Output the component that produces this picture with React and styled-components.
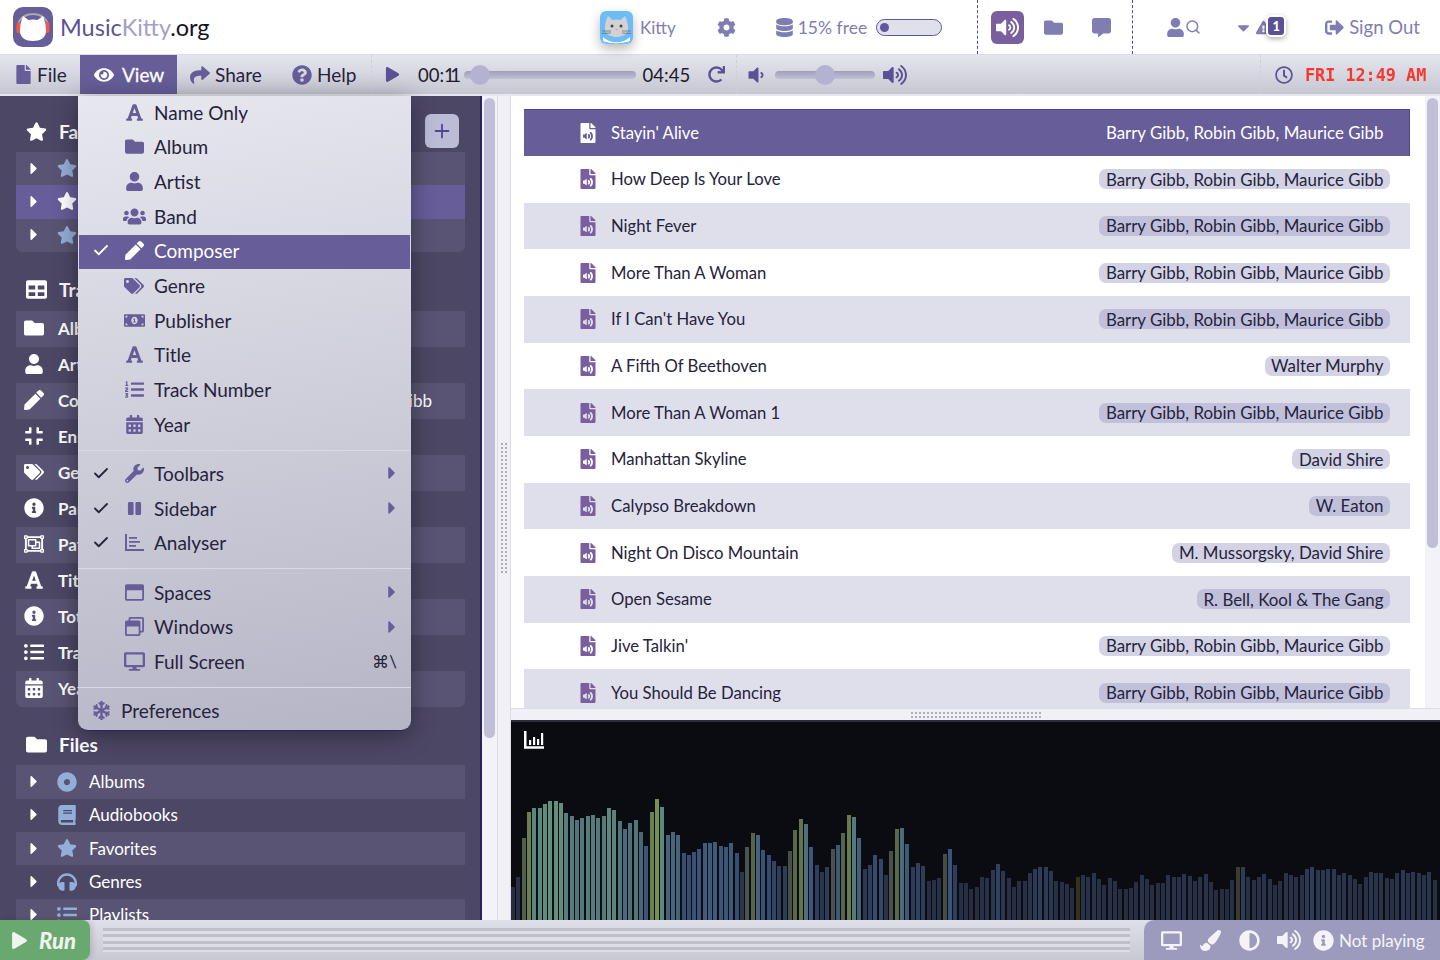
import styled, { createGlobalStyle } from 'styled-components';
import { Check, Plus, Search } from 'lucide-react';
import {
  FaAdjust, FaBook, FaCalendarAlt, FaCaretDown, FaCaretRight, FaCog,
  FaCommentAlt, FaCompress, FaDatabase, FaDesktop, FaDotCircle, FaExclamationTriangle,
  FaEye, FaFile, FaFileAudio, FaFolder, FaFont, FaHeadphones, FaInfoCircle, FaListOl, FaListUl,
  FaMoneyBillAlt, FaPaintBrush, FaPause, FaPen, FaPlay, FaQuestionCircle,
  FaRedo, FaRegClock, FaRegObjectGroup, FaRegWindowMaximize, FaRegWindowRestore, FaShare,
  FaSignOutAlt, FaSnowflake, FaStar, FaTable, FaTags, FaUser, FaUsers, FaVolumeDown, FaVolumeUp,
  FaWrench,
} from 'react-icons/fa';

const GlobalStyle = createGlobalStyle`
  html, body { margin: 0; height: 100%; overflow: hidden; }
  body { font-family: "Lato", "Liberation Sans", sans-serif; color: #26233c; }
  * { box-sizing: border-box; }
`;

const ACCENT = '#675d99';
const HEADER_ICON = '#7f7db2';

const Page = styled.div`
  width: 1440px;
  height: 960px;
  display: flex;
  flex-direction: column;
  position: relative;
  overflow: hidden;
`;

/* top bar */
const Header = styled.header`
  height: 54px;
  flex: none;
  display: flex;
  align-items: center;
  background: #fff;
`;

const Brand = styled.div`
  display: flex;
  align-items: center;
  gap: 7px;
  padding-left: 13px;
  width: 600px;
  font-size: 23.5px;
  color: #15131f;
  span:nth-child(1) { color: #5b5296; }
  span:nth-child(2) { color: #a3a0c4; }
`;

const BrandName = styled.div``;

const HeaderItem = styled.div`
  display: flex;
  align-items: center;
  gap: ${(p) => p.$gap ?? 5}px;
  margin-left: ${(p) => p.$ml ?? 0}px;
  font-size: ${(p) => p.$size ?? 19}px;
  color: ${HEADER_ICON};
  position: relative;
  flex: none;
  svg { font-size: 19px; flex: none; }
`;

const Avatar = styled.div`
  width: 33px;
  height: 33px;
  border-radius: 6px;
  overflow: hidden;
  box-shadow: 0 5px 12px rgba(0, 0, 0, 0.28);
  svg { display: block; font-size: inherit; }
`;

const Meter = styled.div`
  width: 66px;
  height: 17px;
  border: 1.5px solid #5f56a0;
  border-radius: 9px;
  background: #e0e0ea;
  padding: 3px 3px;
  margin-left: 5px;
  &::before {
    content: '';
    display: block;
    width: 9px;
    height: 9px;
    border-radius: 50%;
    background: #5f56a0;
  }
`;

const DashedGroup = styled.div`
  height: 54px;
  width: 156px;
  margin-left: 35px;
  flex: none;
  display: flex;
  align-items: center;
  padding-left: 13px;
  border-left: 1.5px dashed #4e469a;
  border-right: 1.5px dashed #4e469a;
`;

const TabButton = styled.div`
  width: 33px;
  height: 33px;
  border-radius: 6px;
  background: #7a5f9e;
  color: #fff;
  font-size: 23px;
  display: flex;
  align-items: center;
  justify-content: center;
`;

const CountBadge = styled.div`
  position: absolute;
  left: 32px;
  top: -3px;
  width: 20px;
  height: 22px;
  border-radius: 5px;
  background: #fff;
  padding: 2px;
  box-shadow: 0 2px 5px rgba(0, 0, 0, 0.3);
  &::before {
    content: '1';
    display: flex;
    align-items: center;
    justify-content: center;
    height: 100%;
    border-radius: 3px;
    background: #5b5296;
    color: #fff;
    font-size: 13px;
    font-weight: 900;
  }
`;

/* toolbar */
const Toolbar = styled.div`
  height: 42px;
  flex: none;
  display: flex;
  align-items: stretch;
  background: linear-gradient(#e5e5ee, #c7c7d3);
  border-top: 1px solid #dbdbe8;
  border-bottom: 2px solid #e6e6ee;
  font-size: 19px;
`;

const MenuButton = styled.div`
  display: flex;
  align-items: center;
  gap: ${(p) => p.$gap ?? 5}px;
  width: ${(p) => p.$w}px;
  padding-left: ${(p) => p.$pl}px;
  flex: none;
  background: ${(p) => (p.$active ? ACCENT : 'transparent')};
  color: ${(p) => (p.$active ? '#fff' : '#26233c')};
  ${(p) => p.$active && '-webkit-text-stroke: 0.3px #fff;'}
  svg { color: ${(p) => (p.$active ? '#fff' : ACCENT)}; font-size: 20px; flex: none; }
`;

const Section = styled.div`
  display: flex;
  align-items: center;
  flex: none;
  width: ${(p) => p.$w}px;
  padding-left: ${(p) => p.$pl}px;
  border-left: 1px dashed #cfcfdc;
  color: #5b5296;
`;

const Time = styled.span`
  color: #1d1b2c;
  margin-left: ${(p) => p.$ml}px;
  font-size: 18.5px;
`;

const TightDigits = styled.span`
  letter-spacing: -4.5px;
`;

const Slider = styled.div`
  width: ${(p) => p.$w}px;
  margin-left: ${(p) => p.$ml}px;
  height: 8px;
  flex: none;
  border-radius: 4px;
  background: linear-gradient(#9f9fb8, #c0c0d8);
  position: relative;
  &::after {
    content: '';
    position: absolute;
    left: ${(p) => p.$pos}px;
    top: -6px;
    width: 20px;
    height: 20px;
    border-radius: 50%;
    background: #b3b2d0;
  }
`;

const Led = styled.span`
  display: inline-block;
  font-family: "DejaVu Sans Mono", "Liberation Mono", monospace;
  font-size: 16.8px;
  font-weight: 700;
  color: #f4352b;
  margin-left: 12px;
  -webkit-mask-image: radial-gradient(circle at center, #000 0.7px, transparent 1px);
  -webkit-mask-size: 2px 2px;
  mask-image: radial-gradient(circle at center, #000 0.7px, transparent 1px);
  mask-size: 2px 2px;
`;

/* main */
const Main = styled.div`
  flex: 1;
  min-height: 0;
  display: flex;
`;

const Sidebar = styled.aside`
  width: 482px;
  flex: none;
  background: #4d4766;
  border-right: 2px solid #2a2360;
  padding: 18px 15px 0 16px;
  overflow: hidden;
  color: #fff;
`;

const Heading = styled.div`
  height: 34px;
  display: flex;
  align-items: center;
  gap: 12px;
  padding-left: 10px;
  margin-bottom: 4px;
  font-size: 19px;
  font-weight: 700;
  svg { font-size: 21px; flex: none; }
`;

const Group = styled.div`
  margin-bottom: 20.7px;
  border-radius: 0 0 6px 6px;
  overflow: hidden;
`;

const TreeRow = styled.div`
  height: 33.33px;
  display: flex;
  align-items: center;
  padding: 0 0 1px 12px;
  font-size: 17px;
  background: ${(p) => (p.$selected ? ACCENT : p.$shaded ? '#595473' : 'transparent')};
`;

const Caret = styled(FaCaretRight)`
  font-size: 19px;
  width: 12px;
  flex: none;
`;

const TreeIcon = styled.span`
  width: 20px;
  margin-left: 17px;
  margin-right: 12px;
  flex: none;
  display: flex;
  justify-content: center;
  font-size: 20px;
  color: ${(p) => (p.$selected ? '#fff' : '#93aed8')};
`;

const InfoRow = styled.div`
  height: 36px;
  display: flex;
  align-items: center;
  justify-content: space-between;
  padding: 0 33px 1px 8px;
  font-size: 17px;
  font-weight: 700;
  background: ${(p) => (p.$shaded ? '#595473' : 'transparent')};
`;

const InfoLabel = styled.span`
  display: flex;
  align-items: center;
  gap: 14px;
  svg { font-size: 20px; width: 20px; flex: none; }
`;

const InfoValue = styled.span`
  font-weight: 400;
`;

const AddButton = styled.div`
  position: absolute;
  left: 425px;
  top: 114px;
  width: 34px;
  height: 34px;
  border-radius: 6px;
  background: #bdbcd6;
  color: #4e469a;
  display: flex;
  align-items: center;
  justify-content: center;
`;

const Track = styled.div`
  width: 15px;
  flex: none;
  padding: 2px 2px;
  background: #f2f2f8;
`;

const Thumb = styled.div`
  height: ${(p) => p.$h}px;
  width: 11px;
  border-radius: 6px;
  background: #bfc0d8;
`;

const Splitter = styled.div`
  width: 14px;
  flex: none;
  display: flex;
  align-items: center;
  justify-content: center;
  background: #f0f0f6;
  border-left: 1px solid #dcdce8;
  border-right: 1px solid #dcdce8;
`;

const Grip = styled.div`
  width: ${(p) => p.$w}px;
  height: ${(p) => p.$h}px;
  background-image: radial-gradient(#adadb8 1.2px, transparent 1.5px);
  background-size: 4px 4px;
`;

const Content = styled.div`
  flex: 1;
  min-width: 0;
  display: flex;
  flex-direction: column;
`;

const ListArea = styled.div`
  height: 612px;
  flex: none;
  display: flex;
  background: #fff;
`;

const List = styled.div`
  flex: 1;
  min-width: 0;
  padding: 13.33px 15px 0 13px;
  overflow: hidden;
`;

const Song = styled.div`
  height: 46.67px;
  display: flex;
  align-items: center;
  justify-content: space-between;
  padding: 0 20px 0 54px;
  background: ${(p) => (p.$selected ? ACCENT : p.$shaded ? '#dfdfeb' : '#fff')};
  color: ${(p) => (p.$selected ? '#fff' : '#26233c')};
  ${(p) => p.$selected && 'box-shadow: inset 0 1px #4f4699, inset -1px 0 #4f4699;'}
`;

const SongTitle = styled.span`
  display: flex;
  align-items: center;
  gap: 13px;
  font-size: 16.7px;
  svg { font-size: 20px; color: ${(p) => (p.$selected ? '#fff' : '#7a5f9e')}; flex: none; }
`;

const Chip = styled.span`
  height: 20px;
  display: flex;
  align-items: center;
  padding: 0 6.5px;
  border-radius: 7px;
  font-size: 16.9px;
  background: ${(p) => (p.$selected ? 'transparent' : p.$shaded ? '#c0c0da' : '#d3d3e5')};
`;

const HSplitter = styled.div`
  height: 14px;
  flex: none;
  display: flex;
  align-items: center;
  justify-content: center;
  background: #f0f0f6;
  border-top: 1px solid #dcdce8;
  border-bottom: 2px solid #2e2c3c;
`;

const Analyser = styled.div`
  flex: 1;
  min-height: 0;
  position: relative;
  background: #0b0b12;
  display: flex;
  align-items: flex-end;
  gap: 1.33px;
  overflow: hidden;
`;

const AnalyserIcon = styled.svg`
  position: absolute;
  left: 13px;
  top: 9px;
`;

const Bar = styled.div`
  width: 4px;
  flex: none;
`;

/* status bar */
const StatusBar = styled.footer`
  height: 40px;
  flex: none;
  display: flex;
  align-items: stretch;
  background: linear-gradient(#dfdfe9, #c9c9d3);
`;

const RunButton = styled.div`
  width: 90px;
  flex: none;
  border-radius: 0 8px 8px 0;
  background: #69a86f;
  color: #eef5ee;
  display: flex;
  align-items: center;
  gap: 11px;
  padding-left: 11px;
  font-size: 22px;
  font-weight: 900;
  font-style: italic;
  box-shadow: 2px 0 6px rgba(0, 0, 0, 0.15);
  svg { font-size: 17px; }
`;

const Stripes = styled.div`
  flex: 1;
  margin: 8px 14px 8px 13px;
  background: repeating-linear-gradient(#bfbfca 0 3px, #dedee8 3px 6.5px);
`;

const StatusPanel = styled.div`
  width: 296px;
  flex: none;
  border-radius: 10px 0 0 0;
  background: #9d9bbd;
  color: #f4f4f8;
  display: flex;
  align-items: center;
  padding-left: 17px;
  gap: 18px;
  font-size: 17px;
  svg { font-size: 21px; flex: none; }
`;

const LoudIcon = styled(FaVolumeUp)`
  && { font-size: 24px; }
  margin-left: -1px;
`;

const StatusText = styled.span`
  display: flex;
  align-items: center;
  gap: 5px;
  margin-left: -6px;
`;

/* view menu */
const Menu = styled.div`
  position: absolute;
  left: 78px;
  top: 96px;
  width: 333px;
  height: 635px;
  border-radius: 0 0 10px 10px;
  background: linear-gradient(170deg, #e7e7ef, #b6b5c6);
  border-bottom: 1px solid #2a2360;
  box-shadow: 0 4px 24px rgba(0, 0, 0, 0.4);
  font-size: 19px;
  color: #26233c;
  z-index: 5;
`;

const MenuItem = styled.div`
  height: 34.67px;
  display: flex;
  align-items: center;
  margin: 0 1px;
  padding: 0 13px 2px;
  background: ${(p) => (p.$active ? ACCENT : 'transparent')};
  color: ${(p) => (p.$active ? '#fff' : 'inherit')};
`;

const CheckCell = styled.span`
  width: 18px;
  flex: none;
  display: flex;
`;

const MenuIcon = styled.span`
  width: 24px;
  margin: 0 8px 0 12px;
  flex: none;
  display: flex;
  justify-content: center;
  font-size: ${(p) => p.$size ?? 19}px;
  color: ${(p) => (p.$active ? '#fff' : ACCENT)};
`;

const MenuLabel = styled.span`
  flex: 1;
`;

const SubCaret = styled(FaCaretRight)`
  color: ${ACCENT};
  font-size: 20px;
  margin-right: -5px;
`;

const Separator = styled.div`
  height: 14.6px;
  background: linear-gradient(transparent 7px, #d8d8e6 7px, #d8d8e6 8px, transparent 8px);
`;

const Preferences = styled(MenuItem)`
  gap: 10px;
  svg { color: ${ACCENT}; font-size: 19px; }
`;

const Shortcut = styled.span`
  font-size: 17px;
`;

const LogoMark = () => (
  <svg width="40" height="40" viewBox="0 0 40 40">
    <rect width="40" height="40" rx="10" fill="#675d99" />
    <path d="M5 19 C6 3 34 3 35 19" fill="none" stroke="#a9a7ae" strokeWidth="2" />
    <rect x="3.5" y="15" width="5" height="11" rx="2.5" fill="#f0584f" />
    <rect x="31.500" y="15" width="5" height="11" rx="2.500" fill="#f0584f" />
    <path d="M7 24 C7 19 8 14 10 9 L15.500 13 C18 12.300 22 12.300 24.500 13 L30 9 C32 14 33 19 33 24 C33 31 27 34 20 34 C13 34 7 31 7 24 Z" fill="#fff" />
  </svg>
);

const KittyFace = () => (
  <svg width="33" height="33" viewBox="0 0 33 33">
    <rect width="33" height="33" fill="#6dbcf5" />
    <path d="M3 26 C10 33 23 33 30 26 L30 30 C22 33 10 33 3 30 Z" fill="#fff" />
    <path d="M5 19 C4.500 14 6 9 8 5 L12.500 9 C15 8.300 18 8.300 20.500 9 L25 5 C27 9 28.500 14 28 19 C27 24 21 26 16.500 26 C12 26 6 24 5 19 Z" fill="#d2d2d2" />
    <circle cx="12" cy="15" r="1.500" fill="#444" />
    <circle cx="21" cy="15" r="1.500" fill="#444" />
    <path d="M15.300 18 h2.400 l-1.200 1.500 Z" fill="#f08a80" />
    <path d="M2 20 H11 M2 22.500 L11 22 M22 20 H31 M22 22 L31 22.500" stroke="#666" strokeWidth="0.7" />
  </svg>
);

// axis with horizontal bars, the Analyser entry in the View menu
const BarsGlyph = () => (
  <svg width="19" height="17" viewBox="0 0 19 17" fill="currentColor">
    <path d="M0 0 h2 v15 h17 v2 h-19 Z M4 3 h8 v1.700 h-8 Z M4 7 h11 v1.700 h-11 Z M4 11 h7 v1.700 h-7 Z" />
  </svg>
);

const SONGS = [
  ["Stayin' Alive", 'Barry Gibb, Robin Gibb, Maurice Gibb'],
  ['How Deep Is Your Love', 'Barry Gibb, Robin Gibb, Maurice Gibb'],
  ['Night Fever', 'Barry Gibb, Robin Gibb, Maurice Gibb'],
  ['More Than A Woman', 'Barry Gibb, Robin Gibb, Maurice Gibb'],
  ["If I Can't Have You", 'Barry Gibb, Robin Gibb, Maurice Gibb'],
  ['A Fifth Of Beethoven', 'Walter Murphy'],
  ['More Than A Woman 1', 'Barry Gibb, Robin Gibb, Maurice Gibb'],
  ['Manhattan Skyline', 'David Shire'],
  ['Calypso Breakdown', 'W. Eaton'],
  ['Night On Disco Mountain', 'M. Mussorgsky, David Shire'],
  ['Open Sesame', 'R. Bell, Kool & The Gang'],
  ["Jive Talkin'", 'Barry Gibb, Robin Gibb, Maurice Gibb'],
  ['You Should Be Dancing', 'Barry Gibb, Robin Gibb, Maurice Gibb'],
];

const INFO_ROWS = [
  [FaFolder, 'Album'],
  [FaUser, 'Artist'],
  [FaPen, 'Composer', 'Barry Gibb, Robin Gibb, Maurice Gibb'],
  [FaCompress, 'Ensemble'],
  [FaTags, 'Genre'],
  [FaInfoCircle, 'Part'],
  [FaRegObjectGroup, 'Path'],
  [FaFont, 'Title'],
  [FaInfoCircle, 'Total Tracks'],
  [FaListUl, 'Track'],
  [FaCalendarAlt, 'Year'],
];

const FILE_ROWS = [
  [FaDotCircle, 'Albums'],
  [FaBook, 'Audiobooks'],
  [FaStar, 'Favorites'],
  [FaHeadphones, 'Genres'],
  [FaListUl, 'Playlists'],
];

const VIEW_ITEMS = [
  [FaFont, 'Name Only'],
  [FaFolder, 'Album'],
  [FaUser, 'Artist'],
  [FaUsers, 'Band', { size: 23 }],
  [FaPen, 'Composer', { active: true, checked: true }],
  [FaTags, 'Genre', { size: 20 }],
  [FaMoneyBillAlt, 'Publisher', { size: 21 }],
  [FaFont, 'Title'],
  [FaListOl, 'Track Number'],
  [FaCalendarAlt, 'Year'],
];

const PANEL_ITEMS = [
  [FaWrench, 'Toolbars', { checked: true, sub: true }],
  [FaPause, 'Sidebar', { checked: true, sub: true, size: 15 }],
  [BarsGlyph, 'Analyser', { checked: true }],
];

const WINDOW_ITEMS = [
  [FaRegWindowMaximize, 'Spaces', { sub: true }],
  [FaRegWindowRestore, 'Windows', { sub: true }],
  [FaDesktop, 'Full Screen', { shortcut: '⌘\\', size: 21 }],
];

// bar tops read off the reference at 3x, 720 being the floor of the analyser
const BAR_TOPS = [
  620, 590, 475, 395, 385, 383, 372, 362, 364, 368, 400, 408, 420, 415, 408, 404, 414, 407, 384, 390,
  424, 448, 430, 420, 456, 498, 395, 358, 380, 464, 456, 464, 518, 524, 516, 506, 488, 488, 486, 498,
  500, 490, 518, 576, 502, 458, 464, 510, 526, 542, 558, 558, 514, 450, 416, 432, 502, 556, 576, 560,
  508, 494, 458, 406, 410, 474, 568, 554, 526, 536, 586, 512, 448, 444, 492, 562, 548, 558, 604, 600,
  594, 522, 506, 556,
  608, 610, 628, 620, 592, 594, 570, 552, 572, 594, 620, 602, 602, 578, 566, 560, 562, 574, 602, 606,
  612, 624, 592, 586, 592, 580, 598, 616, 594, 602, 628, 628, 624, 606, 586, 598, 616, 608, 610, 586,
  592, 592, 582, 588, 604, 590, 582, 606, 630, 626, 628, 600, 560, 562, 590, 600, 592, 582, 596, 616,
  602, 580, 586, 592, 586, 568, 560, 570, 570, 568, 568, 584, 578, 584, 596, 612, 592, 576, 578, 580,
  594, 596, 580, 570, 578, 575, 580, 586, 575, 600,
];

const BAR_STOPS = [
  [20, 40, 40, 60],
  [45, 40, 50, 72],
  [70, 58, 82, 120],
  [95, 78, 110, 122],
  [120, 100, 145, 125],
];

const barColor = (top, prevTop) => {
  const h = (720 - top) / 3;
  const upper = BAR_STOPS.findIndex((s) => s[0] >= h);
  const hi = BAR_STOPS[upper < 1 ? (upper === 0 ? 1 : BAR_STOPS.length - 1) : upper];
  const lo = BAR_STOPS[BAR_STOPS.indexOf(hi) - 1];
  const t = Math.max(0, Math.min(1, (h - lo[0]) / (hi[0] - lo[0])));
  const mix = (i) => Math.round(lo[i] + (hi[i] - lo[i]) * t);
  // a bar that jumps above its neighbour is more olive in the picture
  const rising = prevTop - top > 30;
  return `rgb(${mix(1) + (rising ? 15 : 0)}, ${mix(2)}, ${mix(3) - (rising ? 45 : 0)})`;
};

const menuRows = (items) =>
  items.map(([Icon, label, opts = {}]) => (
    <MenuItem key={label} $active={opts.active}>
      <CheckCell>{opts.checked && <Check size={19} strokeWidth={2.4} />}</CheckCell>
      <MenuIcon $active={opts.active} $size={opts.size}>
        <Icon />
      </MenuIcon>
      <MenuLabel>{label}</MenuLabel>
      {opts.sub && <SubCaret />}
      {opts.shortcut && <Shortcut>{opts.shortcut}</Shortcut>}
    </MenuItem>
  ));

export default function App() {
  return (
    <Page>
      <GlobalStyle />
      <Header>
        <Brand>
          <LogoMark />
          <BrandName>
            <span>Music</span>
            <span>Kitty</span>.org
          </BrandName>
        </Brand>
        <HeaderItem $gap={7} $size={17}>
          <Avatar>
            <KittyFace />
          </Avatar>
          Kitty
        </HeaderItem>
        <HeaderItem $ml={41}>
          <FaCog />
        </HeaderItem>
        <HeaderItem $ml={39} $gap={4} $size={17.5}>
          <FaDatabase />
          15% free
          <Meter />
        </HeaderItem>
        <DashedGroup>
          <TabButton>
            <FaVolumeUp />
          </TabButton>
          <HeaderItem $ml={20}>
            <FaFolder />
          </HeaderItem>
          <HeaderItem $ml={29}>
            <FaCommentAlt />
          </HeaderItem>
        </DashedGroup>
        <HeaderItem $ml={33} $gap={0}>
          <FaUser />
          <Search size={16} strokeWidth={2.2} />
        </HeaderItem>
        <HeaderItem $ml={33} $gap={3}>
          <FaCaretDown />
          <FaExclamationTriangle style={{ fontSize: 15 }} />
          <CountBadge />
        </HeaderItem>
        <HeaderItem $ml={54} $size={18.5}>
          <FaSignOutAlt />
          Sign Out
        </HeaderItem>
      </Header>

      <Toolbar>
        <MenuButton $w={80} $pl={14} $gap={4}>
          <FaFile style={{ fontSize: 19 }} />
          File
        </MenuButton>
        <MenuButton $w={97} $pl={14} $gap={8} $active>
          <FaEye />
          View
        </MenuButton>
        <MenuButton $w={102} $pl={13}>
          <FaShare />
          Share
        </MenuButton>
        <MenuButton $w={92} $pl={13}>
          <FaQuestionCircle />
          Help
        </MenuButton>
        <Section $w={365} $pl={13}>
          <FaPlay style={{ fontSize: 15 }} />
          <Time $ml={18}>
            00:<TightDigits>11</TightDigits>
          </Time>
          <Slider $w={172} $ml={7} $pos={6} />
          <Time $ml={7}>04:45</Time>
          <FaRedo style={{ marginLeft: 18, fontSize: 17 }} />
        </Section>
        <Section $w={524} $pl={9}>
          <FaVolumeDown style={{ fontSize: 20 }} />
          <Slider $w={100} $ml={9} $pos={40} />
          <FaVolumeUp style={{ marginLeft: 8, fontSize: 24 }} />
        </Section>
        <Section $w={180} $pl={14}>
          <FaRegClock style={{ fontSize: 18 }} />
          <Led>FRI 12:49 AM</Led>
        </Section>
      </Toolbar>

      <Main>
        <Sidebar>
          <Heading>
            <FaStar />
            Favorites
          </Heading>
          <Group>
            <TreeRow $shaded>
              <Caret />
              <TreeIcon><FaStar /></TreeIcon>
            </TreeRow>
            <TreeRow $selected>
              <Caret />
              <TreeIcon $selected><FaStar /></TreeIcon>
            </TreeRow>
            <TreeRow $shaded>
              <Caret />
              <TreeIcon><FaStar /></TreeIcon>
            </TreeRow>
          </Group>
          <Heading>
            <FaTable />
            Track Info
          </Heading>
          <Group>
            {INFO_ROWS.map(([Icon, label, value], i) => (
              <InfoRow key={label} $shaded={i % 2 === 0}>
                <InfoLabel>
                  <Icon />
                  {label}
                </InfoLabel>
                {value && <InfoValue>{value}</InfoValue>}
              </InfoRow>
            ))}
          </Group>
          <Heading>
            <FaFolder />
            Files
          </Heading>
          <Group>
            {FILE_ROWS.map(([Icon, label], i) => (
              <TreeRow key={label} $shaded={i % 2 === 0}>
                <Caret />
                <TreeIcon><Icon /></TreeIcon>
                {label}
              </TreeRow>
            ))}
          </Group>
        </Sidebar>
        <AddButton>
          <Plus size={22} strokeWidth={2} />
        </AddButton>
        <Track>
          <Thumb $h={640} />
        </Track>
        <Splitter>
          <Grip $w={9} $h={132} />
        </Splitter>
        <Content>
          <ListArea>
            <List>
              {SONGS.map(([title, composer], i) => (
                <Song key={title} $selected={i === 0} $shaded={i % 2 === 0}>
                  <SongTitle $selected={i === 0}>
                    <FaFileAudio />
                    {title}
                  </SongTitle>
                  <Chip $selected={i === 0} $shaded={i % 2 === 0}>
                    {composer}
                  </Chip>
                </Song>
              ))}
            </List>
            <Track>
              <Thumb $h={450} />
            </Track>
          </ListArea>
          <HSplitter>
            <Grip $w={132} $h={8} />
          </HSplitter>
          <Analyser>
            <AnalyserIcon width="20" height="18" viewBox="0 0 20 18">
              <path d="M1.250 0 V16.500 H20" fill="none" stroke="#fff" strokeWidth="2.500" />
              <path d="M5 9 h2.200 v5 h-2.200 Z M9 6 h2.200 v8 h-2.200 Z M13 8 h2.200 v6 h-2.200 Z M17 2 h2.200 v12 h-2.200 Z" fill="#fff" />
            </AnalyserIcon>
            {BAR_TOPS.map((top, i) => (
              <Bar
                key={i}
                style={{
                  height: (720 - top) / 3,
                  background: barColor(top, BAR_TOPS[i - 1] ?? top),
                }}
              />
            ))}
          </Analyser>
        </Content>
      </Main>

      <StatusBar>
        <RunButton>
          <FaPlay />
          Run
        </RunButton>
        <Stripes />
        <StatusPanel>
          <FaDesktop />
          <FaPaintBrush />
          <FaAdjust />
          <LoudIcon />
          <StatusText>
            <FaInfoCircle />
            Not playing
          </StatusText>
        </StatusPanel>
      </StatusBar>

      <Menu>
        {menuRows(VIEW_ITEMS)}
        <Separator />
        {menuRows(PANEL_ITEMS)}
        <Separator />
        {menuRows(WINDOW_ITEMS)}
        <Separator />
        <Preferences>
          <FaSnowflake />
          Preferences
        </Preferences>
      </Menu>
    </Page>
  );
}
